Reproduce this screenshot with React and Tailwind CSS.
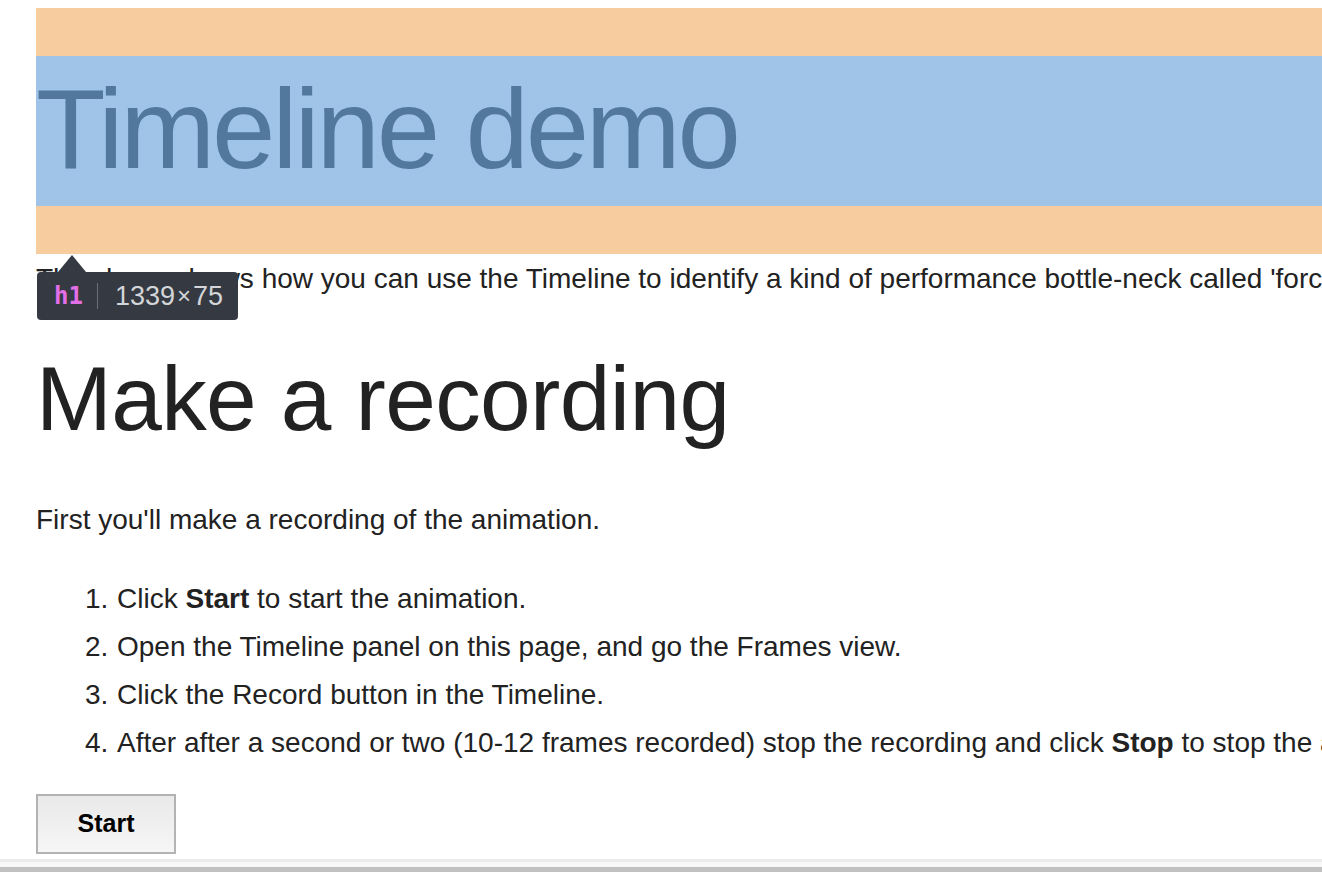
import React from 'react';

const steps = [
    <>Click <b>Start</b> to start the animation.</>,
    <>Open the Timeline panel on this page, and go the Frames view.</>,
    <>Click the Record button in the Timeline.</>,
    <>After after a second or two (10-12 frames recorded) stop the recording and click <b>Stop</b> to stop the animation.</>,
];

const App = () => {
    return (
        <div className="relative h-[872px] w-[1322px] overflow-hidden bg-white font-['Liberation_Sans',Arial,sans-serif] text-[#222]">
            <div className="flex flex-col pt-[8px] pl-[36px] whitespace-nowrap">
                {/* h1 with devtools box-model overlay (margin + content) */}
                <div className="w-[1339px] bg-[#f7cc9e] py-[48px]">
                    <h1 className="h-[150px] bg-[#a0c4e8] text-[114px] leading-[145px] tracking-[-3.2px] text-[#52789d]">
                        Timeline demo
                    </h1>
                </div>

                <p className="mt-[4px] text-[28px]">
                    This demo shows how you can use the Timeline to identify a kind of performance bottle-neck called 'forced synchronous layouts'.
                </p>

                <h2 className="mt-[53px] text-[91px] leading-[91px] tracking-[-0.6px]">Make a recording</h2>

                <p className="mt-[55px] text-[28px]">First you'll make a recording of the animation.</p>

                <ol className="mt-[34px] text-[28px] leading-[48px]">
                    {steps.map((s, i) => (
                        <li key={i} className="flex pl-[49px]">
                            <span className="w-[32px] shrink-0">{i + 1}.</span>
                            <span>{s}</span>
                        </li>
                    ))}
                </ol>

                <div className="mt-[27px]">
                    <button className="h-[60px] w-[140px] border-2 border-[#b3b3b3] bg-gradient-to-b from-[#e9e9e9] to-[#f6f6f6] text-[25px] font-bold text-black">
                        Start
                    </button>
                </div>
            </div>

            {/* devtools element tooltip */}
            <div className="absolute left-[37px] top-[272px] flex h-[48px] w-[201px] items-center rounded-[4px] bg-[#353a42] pl-[17px]">
                <div className="absolute left-[21px] top-[-17px] h-0 w-0 border-x-[14px] border-b-[17px] border-x-transparent border-b-[#353a42]" />
                <span className="font-['DejaVu_Sans_Mono',monospace] text-[24px] font-bold text-[#e36fe8]">h1</span>
                <span className="ml-[14px] mr-[17px] h-[26px] w-[1px] bg-[#6b6f76]" />
                <span className="flex items-center text-[27px] text-[#d3d5d8]">
                    1339<span className="mx-[2px] text-[24px]">×</span>75
                </span>
            </div>

            {/* horizontal scrollbar */}
            <div className="absolute bottom-0 left-0 right-0 flex flex-col">
                <div className="h-[3px] bg-[#ebebeb]" />
                <div className="h-[5px] bg-[#f8f8f8]" />
                <div className="h-[5px] bg-[#c1c1c1]" />
            </div>
        </div>
    );
};

export default App;
